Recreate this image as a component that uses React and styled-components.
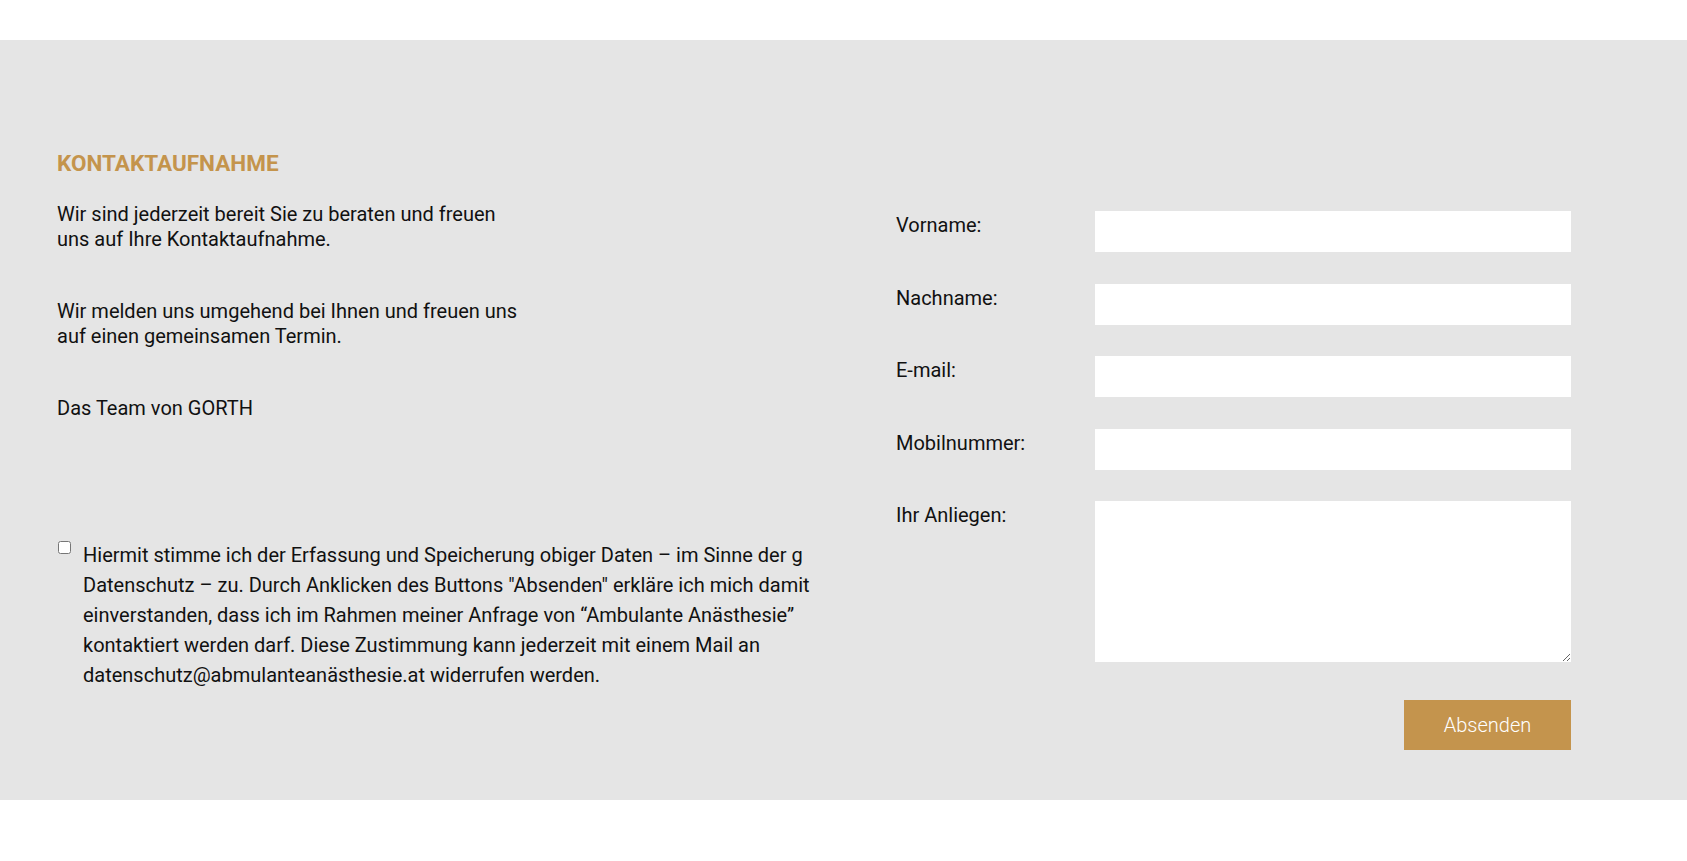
import React from 'react';
import styled, {createGlobalStyle} from 'styled-components';

const GlobalStyle = createGlobalStyle`
  html, body {
    margin: 0;
    padding: 0;
    background: #ffffff;
  }
  body {
    font-family: Roboto, "Noto Sans", "Liberation Sans", sans-serif;
    color: #111111;
  }
`

const Page = styled.div`
  padding: 40px 0 61px;
`

const Section = styled.section`
  background: #e5e5e5;
  padding: 109px 116px 50px 57px;
  display: grid;
  grid-template-columns: 1fr 675px;
  column-gap: 80px;
`

const Intro = styled.div`
  display: flex;
  flex-direction: column;
`

const Heading = styled.h2`
  margin: 0 0 25px;
  font-size: 22.5px;
  line-height: 28px;
  font-weight: 700;
  color: #c4944c;
  text-transform: uppercase;
`

const Text = styled.p`
  margin: 0 0 47px;
  font-size: 20px;
  line-height: 25px;
`

const Consent = styled.label`
  display: flex;
  gap: 12px;
  margin-top: 72px;
  max-width: 786px;
  font-size: 20px;
  line-height: 30px;
  cursor: pointer;

  input {
    flex: none;
    width: 13px;
    height: 13px;
    margin: 1px 0 0 1px;
  }
`

const Form = styled.form`
  margin-top: 62px;
  display: flex;
  flex-direction: column;
`

const Row = styled.div`
  display: grid;
  grid-template-columns: 199px 476px;
  align-items: start;
  margin-bottom: ${p => p.$last ? '38px' : '31.6px'};
`

const Label = styled.label`
  font-size: 20px;
  line-height: 25px;
  padding-top: 2px;
`

const Field = styled.input`
  box-sizing: border-box;
  height: 41px;
  width: 100%;
  border: none;
  background: #ffffff;
  font: inherit;
  padding: 0 12px;
  outline: none;
`

const Area = styled.textarea`
  box-sizing: border-box;
  height: 161px;
  width: 100%;
  border: none;
  background: #ffffff;
  font: inherit;
  padding: 8px 12px;
  outline: none;
  display: block;
`

const Actions = styled.div`
  display: flex;
  justify-content: flex-end;
`

const Button = styled.button`
  width: 167px;
  height: 50px;
  border: none;
  background: #c4944d;
  color: #ffffff;
  font-family: Roboto, sans-serif;
  font-size: 20px;
  font-weight: 300;
  cursor: pointer;
`

const fields = [
  {id: 'vorname', label: 'Vorname:', type: 'text'},
  {id: 'nachname', label: 'Nachname:', type: 'text'},
  {id: 'email', label: 'E-mail:', type: 'email'},
  {id: 'mobil', label: 'Mobilnummer:', type: 'tel'},
]

export default function App() {
  return (
    <Page>
      <GlobalStyle/>
      <Section>
        <Intro>
          <Heading>Kontaktaufnahme</Heading>
          <Text>
            Wir sind jederzeit bereit Sie zu beraten und freuen<br/>
            uns auf Ihre Kontaktaufnahme.
          </Text>
          <Text>
            Wir melden uns umgehend bei Ihnen und freuen uns<br/>
            auf einen gemeinsamen Termin.
          </Text>
          <Text>Das Team von GORTH</Text>
          <Consent>
            <input type="checkbox"/>
            <span>
              Hiermit stimme ich der Erfassung und Speicherung obiger Daten – im Sinne der g<br/>
              Datenschutz – zu. Durch Anklicken des Buttons "Absenden" erkläre ich mich damit
              einverstanden, dass ich im Rahmen meiner Anfrage von “Ambulante Anästhesie”
              kontaktiert werden darf. Diese Zustimmung kann jederzeit mit einem Mail an
              datenschutz@abmulanteanästhesie.at widerrufen werden.
            </span>
          </Consent>
        </Intro>

        <Form onSubmit={e => e.preventDefault()}>
          {fields.map(f => (
            <Row key={f.id}>
              <Label htmlFor={f.id}>{f.label}</Label>
              <Field id={f.id} type={f.type}/>
            </Row>
          ))}
          <Row $last>
            <Label htmlFor="anliegen">Ihr Anliegen:</Label>
            <Area id="anliegen"/>
          </Row>
          <Actions>
            <Button type="submit">Absenden</Button>
          </Actions>
        </Form>
      </Section>
    </Page>
  )
}
